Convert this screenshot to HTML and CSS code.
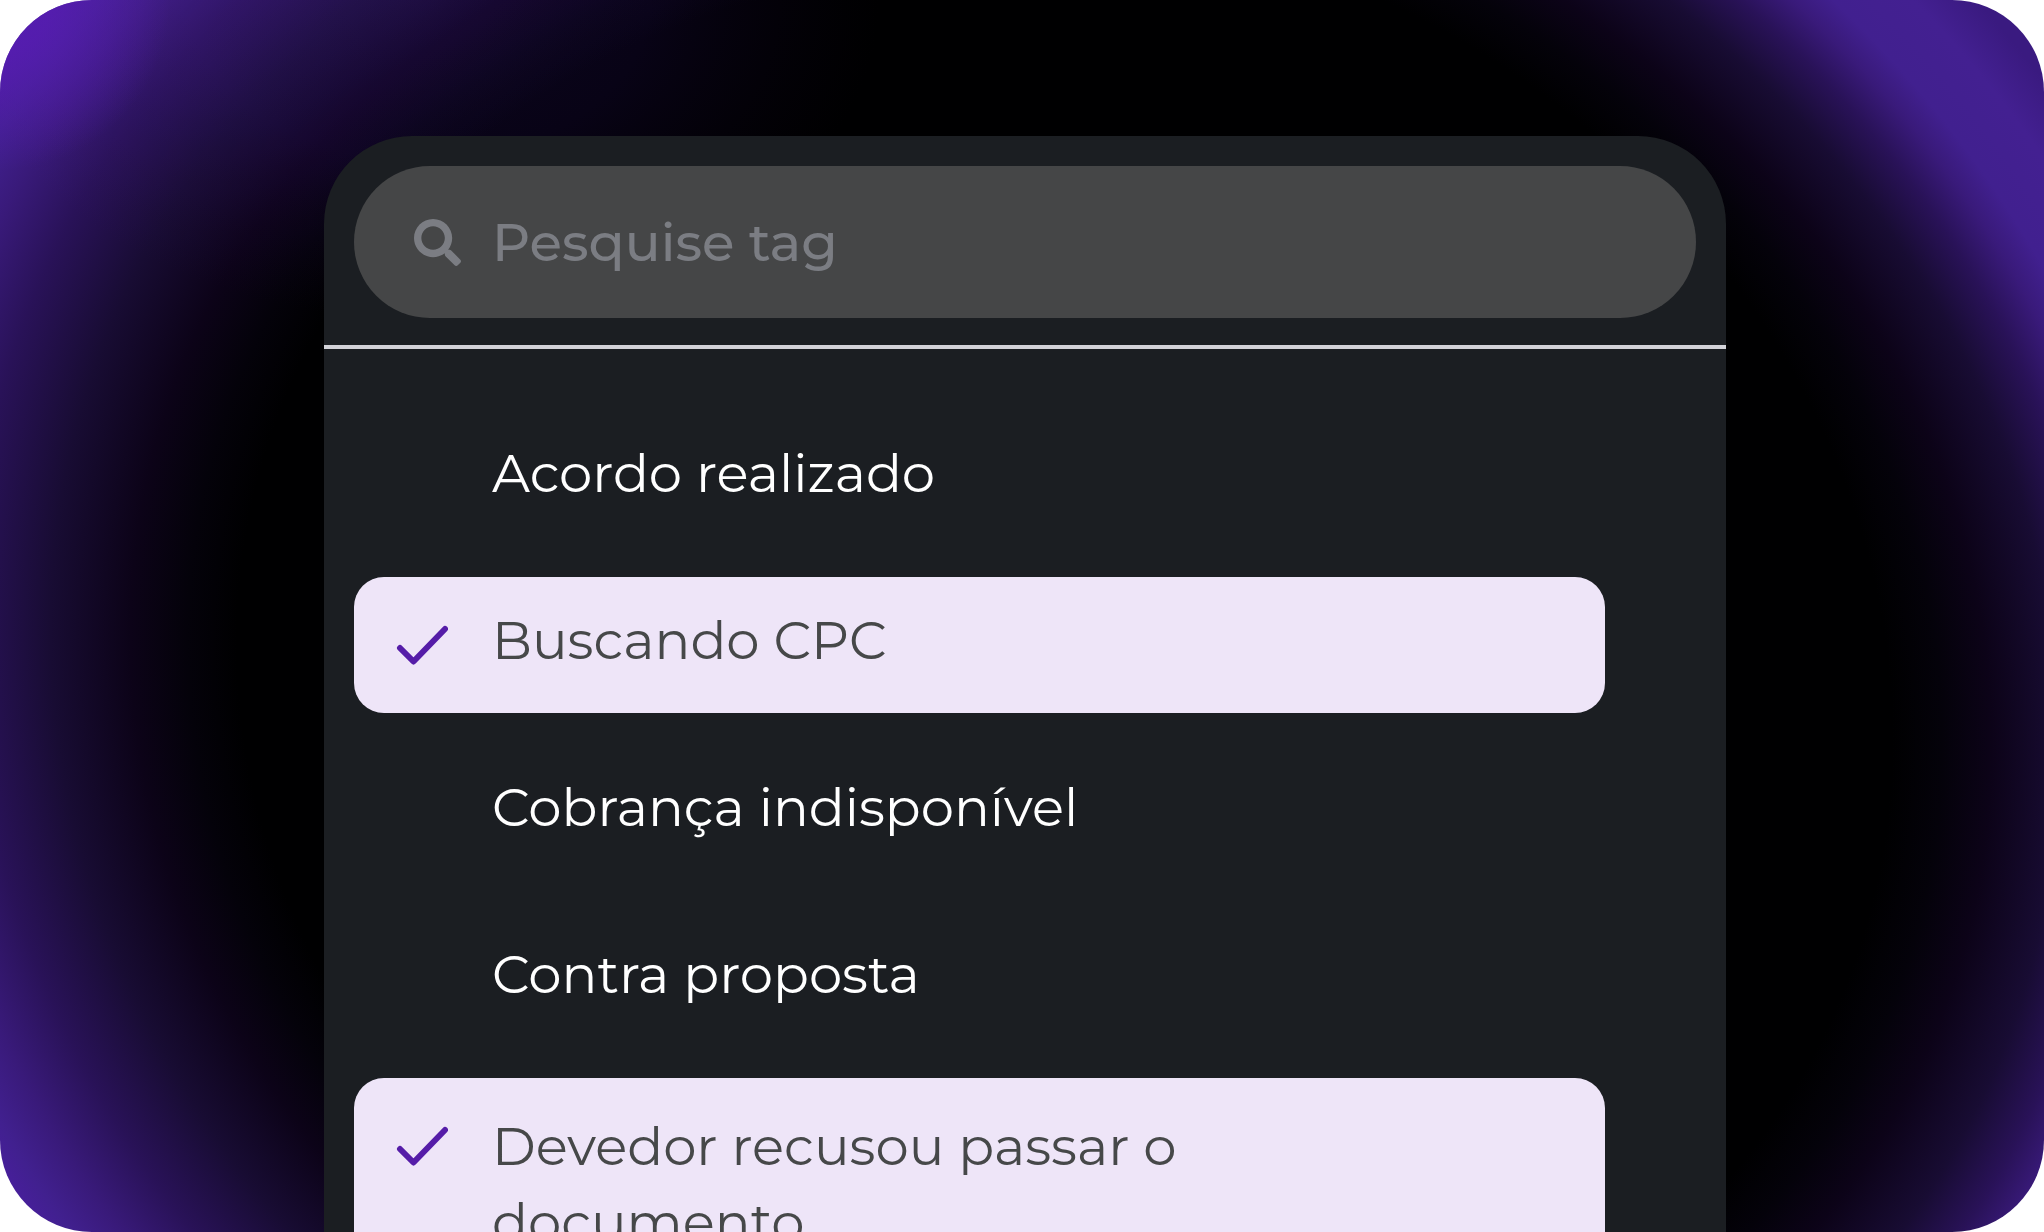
FILE: index.html
```html
<!DOCTYPE html>
<html lang="pt-BR">
<head>
<meta charset="UTF-8">
<meta name="viewport" content="width=device-width, initial-scale=1.0">
<title>Tags</title>
<link rel="stylesheet" href="styles.css">
</head>
<body>

<main class="stage">
  <svg class="backdrop" viewBox="0 0 2044 1232" preserveAspectRatio="none" aria-hidden="true">
    <defs>
      <radialGradient id="left" gradientUnits="userSpaceOnUse" cx="0" cy="0" r="1240" gradientTransform="translate(1046 704) rotate(20) scale(1.017 .893)">
        <stop offset=".65" stop-color="#000001"/>
        <stop offset=".69" stop-color="#04020a"/>
        <stop offset=".736" stop-color="#0c0318"/>
        <stop offset=".8" stop-color="#180c33"/>
        <stop offset=".865" stop-color="#291258"/>
        <stop offset=".915" stop-color="#391a7a"/>
        <stop offset=".95" stop-color="#41208f"/>
        <stop offset=".985" stop-color="#4b1ea2"/>
      </radialGradient>
      <radialGradient id="right" gradientUnits="userSpaceOnUse" cx="0" cy="0" r="1240" gradientTransform="translate(1046 675) rotate(20) scale(1.017 .893)">
        <stop offset=".68" stop-color="#000001"/>
        <stop offset=".72" stop-color="#04020a"/>
        <stop offset=".76" stop-color="#0c0318"/>
        <stop offset=".815" stop-color="#180c33"/>
        <stop offset=".855" stop-color="#291258"/>
        <stop offset=".885" stop-color="#391a7a"/>
        <stop offset=".91" stop-color="#41208f"/>
        <stop offset=".96" stop-color="#432091"/>
        <stop offset="1" stop-color="#3a1a80"/>
      </radialGradient>
      <radialGradient id="corner" gradientUnits="userSpaceOnUse" cx="0" cy="0" r="170">
        <stop offset=".3" stop-color="#571cb2" stop-opacity=".8"/>
        <stop offset="1" stop-color="#571cb2" stop-opacity="0"/>
      </radialGradient>
      <radialGradient id="top" gradientUnits="userSpaceOnUse" cx="0" cy="0" r="1" gradientTransform="translate(420 0) scale(460 320)">
        <stop offset="0" stop-color="#150a34" stop-opacity=".6"/>
        <stop offset=".5" stop-color="#10062a" stop-opacity=".5"/>
        <stop offset="1" stop-color="#0c0318" stop-opacity="0"/>
      </radialGradient>
    </defs>
    <rect width="1047" height="1232" fill="url(#left)"/>
    <rect x="1046" width="998" height="1232" fill="url(#right)"/>
    <rect width="880" height="320" fill="url(#top)" class="glow"/>
    <rect width="170" height="170" fill="url(#corner)"/>
  </svg>

  <section class="panel">
    <div class="search">
      <label class="search-box">
        <svg class="search-icon" viewBox="0 0 512 512" aria-hidden="true">
          <path d="M505 442.700L405.300 343c-4.500-4.500-10.600-7-17-7H372c27.600-35.300 44-79.700 44-128C416 93.100 322.900 0 208 0S0 93.100 0 208s93.100 208 208 208c48.300 0 92.700-16.400 128-44v16.300c0 6.400 2.500 12.500 7 17l99.700 99.700c9.400 9.400 24.600 9.400 33.900 0l28.300-28.300c9.400-9.400 9.400-24.600.1-34zM208 336c-70.700 0-128-57.200-128-128 0-70.700 57.200-128 128-128 70.700 0 128 57.200 128 128 0 70.700-57.200 128-128 128z"/>
        </svg>
        <input class="search-input" type="text" placeholder="Pesquise tag" aria-label="Pesquise tag">
      </label>
    </div>

    <div class="tags">
      <label class="tag">
        <input type="checkbox">
        <svg class="check" viewBox="0 0 52 40" aria-hidden="true"><path d="M4 23l13.500 13.500L49 4"/></svg>
        <span>Acordo realizado</span>
      </label>
      <label class="tag">
        <input type="checkbox" checked>
        <svg class="check" viewBox="0 0 52 40" aria-hidden="true"><path d="M4 23l13.500 13.500L49 4"/></svg>
        <span>Buscando CPC</span>
      </label>
      <label class="tag">
        <input type="checkbox">
        <svg class="check" viewBox="0 0 52 40" aria-hidden="true"><path d="M4 23l13.500 13.500L49 4"/></svg>
        <span>Cobrança indisponível</span>
      </label>
      <label class="tag">
        <input type="checkbox">
        <svg class="check" viewBox="0 0 52 40" aria-hidden="true"><path d="M4 23l13.500 13.500L49 4"/></svg>
        <span>Contra proposta</span>
      </label>
      <label class="tag tag-long">
        <input type="checkbox" checked>
        <svg class="check" viewBox="0 0 52 40" aria-hidden="true"><path d="M4 23l13.500 13.500L49 4"/></svg>
        <span>Devedor recusou passar o documento</span>
      </label>
    </div>
  </section>
</main>

</body>
</html>
```
FILE: styles.css
```css
* {
  box-sizing: border-box;
}
body {
  margin: 0;
  background: #fff;
  font-family: Montserrat, Inter, sans-serif;
  font-size: 53px;
  line-height: 76px;
}
.stage {
  position: relative;
  height: 100vh;
  padding: 136px 318px 0 324px;
  border-radius: 92px;
  overflow: hidden;
}
.backdrop {
  position: absolute;
  inset: 0;
  width: 100%;
  height: 100%;
}
.glow {
  mix-blend-mode: screen;
}
.panel {
  position: relative;
  background: #1b1e22;
  border-radius: 88px 88px 0 0;
}
.search {
  padding: 30px 30px 27px;
  border-bottom: 4px solid #d2d2d8;
}
.search-box {
  display: flex;
  align-items: center;
  gap: 31px;
  padding: 38px 60px;
  border-radius: 76px;
  background: #454647;
}
.search-icon {
  flex: none;
  width: 47px;
  height: 47px;
  fill: #7b7d83;
}
.search-input {
  flex: 1;
  min-width: 0;
  height: 76px;
  padding: 0;
  border: none;
  outline: none;
  background: none;
  font: inherit;
  font-weight: 500;
  color: #fff;
}
.search-input::placeholder {
  color: #7b7d83;
  opacity: 1;
}
.tags {
  display: flex;
  flex-direction: column;
  gap: 31px;
  padding: 61px 121px 61px 30px;
}
.tag {
  display: grid;
  grid-template-columns: 52px 1fr;
  column-gap: 44px;
  padding: 25px 42px 35px;
  border-radius: 30px;
  color: #fff;
  cursor: pointer;
}
.tag-long {
  padding: 30px 300px 30px 42px;
}
.tag input,
.check {
  grid-area: 1 / 1;
  width: 52px;
  height: 40px;
  margin: 23px 0 0;
}
.tag-long .check {
  margin-top: 18px;
}
.tag input {
  appearance: none;
}
.check {
  visibility: hidden;
  fill: none;
  stroke: #551ca8;
  stroke-width: 6;
  stroke-linecap: round;
  stroke-linejoin: round;
}
.tag:has(input:checked) {
  background: #eee5f8;
  color: #464849;
}
.tag input:checked + .check {
  visibility: visible;
}
```
